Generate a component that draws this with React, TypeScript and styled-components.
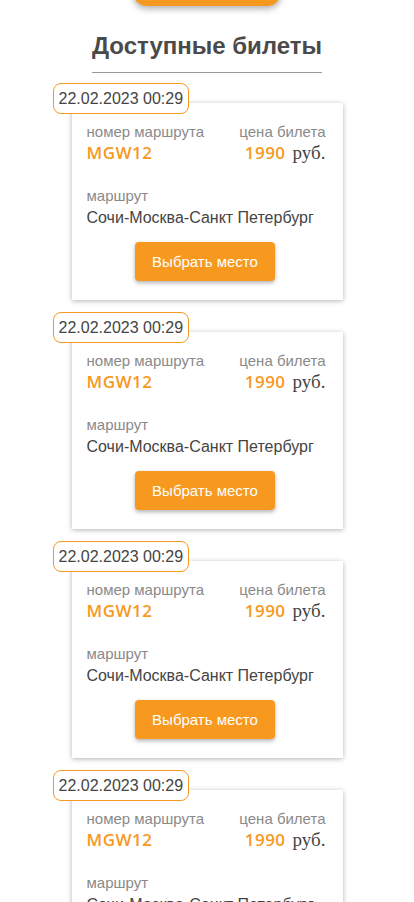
import React from "react";
import styled, { createGlobalStyle } from "styled-components";

const Global = createGlobalStyle`
  html, body { margin: 0; padding: 0; background: #fff; }
  body { font-family: Arial, "Liberation Sans", sans-serif; overflow: hidden; }
`;

const ORANGE = "#f7991f";

const Page = styled.div`
  width: 414px;
  display: flex;
  flex-direction: column;
  align-items: center;
`;

const TopButton = styled.button`
  width: 148px;
  height: 40px;
  margin-top: -34px;
  border: none;
  border-radius: 14px;
  background: ${ORANGE};
  box-shadow: 0 3px 6px rgba(0, 0, 0, 0.3);
`;

const Title = styled.h2`
  margin: 26px 0 0;
  padding: 0 0 12px;
  font-family: Arial, "Liberation Sans", sans-serif;
  font-size: 24px;
  line-height: 28px;
  font-weight: 700;
  color: #4a4a4a;
  border-bottom: 1px solid #999;
`;

const List = styled.div`
  margin-top: 10px;
  display: flex;
  flex-direction: column;
  gap: 12px;
  width: 271px;
`;

const Ticket = styled.div`
  position: relative;
  padding-top: 20px;
`;

const DateBadge = styled.div`
  position: absolute;
  top: 0;
  left: -19px;
  z-index: 2;
  height: 29px;
  padding: 0 5px;
  display: flex;
  align-items: center;
  border: 1px solid ${ORANGE};
  border-radius: 8px;
  background: #fff;
  font-size: 16px;
  color: #444;
`;

const Card = styled.div`
  background: #fff;
  box-shadow: 0 1px 5px rgba(0, 0, 0, 0.3);
  padding: 20px 17px 19px 15px;
  display: flex;
  flex-direction: column;
`;

const Row = styled.div`
  display: flex;
  justify-content: space-between;
`;

const Field = styled.div<{ $right?: boolean }>`
  display: flex;
  flex-direction: column;
  align-items: ${(p) => (p.$right ? "flex-end" : "flex-start")};
`;

const Label = styled.div`
  font-size: 15px;
  line-height: 18px;
  color: #8a8a8a;
`;

const Accent = styled.span`
  font-family: "Open Sans", sans-serif;
  font-weight: 600;
  font-size: 17px;
  line-height: 24px;
  letter-spacing: 0.5px;
  color: ${ORANGE};
`;

const Currency = styled.span`
  font-family: "Liberation Serif", "Times New Roman", serif;
  font-size: 19px;
  color: #444;
  margin-left: 7px;
`;

const RouteBlock = styled.div`
  margin-top: 22px;
  display: flex;
  flex-direction: column;
  gap: 3px;
`;

const RouteText = styled.div`
  font-size: 16px;
  line-height: 20px;
  color: #444;
`;

const SelectButton = styled.button`
  align-self: center;
  margin-top: 14px;
  margin-left: -2px;
  width: 140px;
  height: 39px;
  border: none;
  border-radius: 4px;
  background: ${ORANGE};
  color: #fff;
  font-family: Arial, "Liberation Sans", sans-serif;
  font-size: 15px;
  box-shadow: 0 2px 4px rgba(0, 0, 0, 0.3);
`;

const tickets = [0, 1, 2, 3].map(() => ({
  date: "22.02.2023 00:29",
  code: "MGW12",
  price: "1990",
  route: "Сочи-Москва-Санкт Петербург",
}));

export default function App() {
  return (
    <>
      <Global />
      <Page>
        <TopButton />
        <Title>Доступные билеты</Title>
        <List>
          {tickets.map((t, i) => (
            <Ticket key={i}>
              <DateBadge>{t.date}</DateBadge>
              <Card>
                <Row>
                  <Field>
                    <Label>номер маршрута</Label>
                    <Accent>{t.code}</Accent>
                  </Field>
                  <Field $right>
                    <Label>цена билета</Label>
                    <div>
                      <Accent>{t.price}</Accent>
                      <Currency>руб.</Currency>
                    </div>
                  </Field>
                </Row>
                <RouteBlock>
                  <Label>маршрут</Label>
                  <RouteText>{t.route}</RouteText>
                </RouteBlock>
                <SelectButton>Выбрать место</SelectButton>
              </Card>
            </Ticket>
          ))}
        </List>
      </Page>
    </>
  );
}
